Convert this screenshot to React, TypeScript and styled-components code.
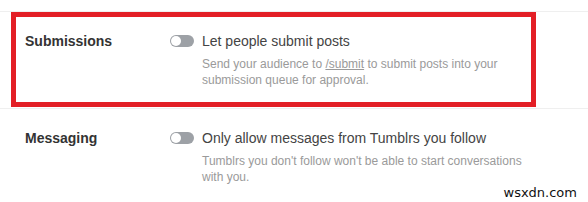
import React from "react";
import styled, { createGlobalStyle } from "styled-components";

const GlobalStyle = createGlobalStyle`
  html, body {
    margin: 0;
    padding: 0;
    background: #fff;
    font-family: "Liberation Sans", Arial, sans-serif;
  }
`;

const Page = styled.div`
  position: relative;
  width: 588px;
  height: 202px;
  padding-top: 11px;
  box-sizing: border-box;
  overflow: hidden;
`;

const Row = styled.section<{ $highlight?: boolean }>`
  position: relative;
  display: grid;
  grid-template-columns: 145px 1fr;
  padding: 19px 0 20px 25px;
  border-top: 1px solid #efefef;

  &::after {
    content: "";
    display: ${({ $highlight }) => ($highlight ? "block" : "none")};
    position: absolute;
    left: 11px;
    top: 0;
    width: 525px;
    height: 95px;
    box-sizing: border-box;
    border: 5px solid #e31f26;
    pointer-events: none;
  }
`;

const Label = styled.h3`
  margin: 0;
  font-size: 14px;
  line-height: 20px;
  font-weight: 700;
  color: #333;
`;

const Option = styled.div`
  display: flex;
  align-items: flex-start;
  gap: 8px;
`;

const Toggle = styled.span<{ $on?: boolean }>`
  flex: none;
  position: relative;
  width: 24px;
  height: 12px;
  margin-top: 4px;
  border-radius: 6px;
  background: ${({ $on }) => ($on ? "#00b8ff" : "#9da1a6")};

  &::before {
    content: "";
    position: absolute;
    top: 1px;
    left: ${({ $on }) => ($on ? "13px" : "1px")};
    width: 10px;
    height: 10px;
    border-radius: 50%;
    background: #fff;
  }
`;

const Body = styled.div`
  max-width: 330px;
`;

const Title = styled.div`
  font-size: 14px;
  line-height: 20px;
  color: #444;
`;

const Desc = styled.p`
  margin: 5px 0 0;
  font-size: 12px;
  line-height: 16px;
  color: #9a9a9a;

  a {
    color: inherit;
    text-decoration: underline;
  }
`;

const Watermark = styled.span`
  position: absolute;
  right: 11px;
  bottom: 2px;
  font-family: "DejaVu Sans", Verdana, sans-serif;
  font-size: 13px;
  color: #111;
`;

export default function App() {
  return (
    <>
      <GlobalStyle />
      <Page>
        <Row $highlight>
          <Label>Submissions</Label>
          <Option>
            <Toggle />
            <Body>
              <Title>Let people submit posts</Title>
              <Desc>
                Send your audience to <a href="#">/submit</a> to submit posts
                into your submission queue for approval.
              </Desc>
            </Body>
          </Option>
        </Row>
        <Row>
          <Label>Messaging</Label>
          <Option>
            <Toggle />
            <Body>
              <Title>Only allow messages from Tumblrs you follow</Title>
              <Desc>
                Tumblrs you don't follow won't be able to start conversations
                with you.
              </Desc>
            </Body>
          </Option>
        </Row>
        <Watermark>wsxdn.com</Watermark>
      </Page>
    </>
  );
}
